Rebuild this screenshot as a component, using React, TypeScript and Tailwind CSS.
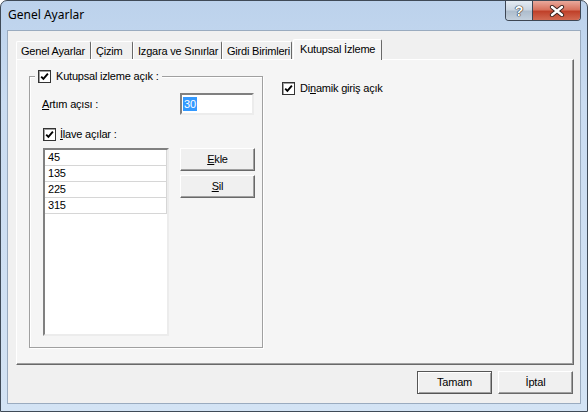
import React from "react"

const ui = { fontFamily: '"Liberation Sans", Arial, sans-serif' }

function Check() {
  return (
    <span className="flex h-[13px] w-[13px] shrink-0 items-center justify-center border border-[#333] bg-white shadow-[inset_1px_1px_0_#a0a0a0]">
      <svg width="9" height="9" viewBox="0 0 9 9">
        <path d="M1.2 4.6 L3.4 6.9 L7.9 1.6" fill="none" stroke="#000" strokeWidth="1.9" />
      </svg>
    </span>
  )
}

function Btn({ children, def = false }: { children: React.ReactNode; def?: boolean }) {
  return (
    <div
      className={
        def
          ? "flex h-[23px] w-[75px] items-center justify-center border border-[#555] bg-[#f0f0f0] shadow-[inset_1px_1px_0_#fff,inset_-1px_-1px_0_#a0a0a0] text-[11px] text-black"
          : "flex h-[23px] w-[75px] items-center justify-center border border-t-white border-l-white border-r-[#696969] border-b-[#696969] bg-[#f0f0f0] shadow-[inset_-1px_-1px_0_#a0a0a0] text-[11px] text-black"
      }
    >
      {children}
    </div>
  )
}

const tabs = [
  { label: "Genel Ayarlar", w: "w-[75px]" },
  { label: "Çizim", w: "w-[42px]" },
  { label: "Izgara ve Sınırlar", w: "w-[89px]" },
  { label: "Girdi Birimleri", w: "w-[70px]" },
]

export default function App() {
  return (
    <div className="h-[412px] w-[588px] bg-white" style={ui}>
      <div className="flex h-[412px] w-[588px] flex-col rounded-t-[7px] border border-[#3f4a57] bg-[linear-gradient(180deg,#bcd2ec_0%,#cadcf1_25%,#d3e3f4_100%)]">
        {/* Title bar */}
        <div className="flex h-[29px] shrink-0 items-start">
          <span
            className="pl-[7px] pt-[6px] text-[12px] leading-[16px] text-black"
            style={{ fontFamily: '"Noto Sans", "Open Sans", sans-serif' }}
          >
            Genel Ayarlar
          </span>
          <div className="ml-auto mr-[6px] flex h-[20px] overflow-hidden rounded-b-[4px] border border-t-0 border-[#3d4654]">
            <div className="flex w-[27px] items-center justify-center border-r border-[#3d4654] bg-[linear-gradient(180deg,#e4ebf3_0%,#cbd6e2_45%,#aebdcd_55%,#c3d0dd_100%)]">
              <span className="text-[14px] font-bold leading-none text-white [text-shadow:0_0_1px_#222,0_0_1px_#222,0_0_1px_#222]">
                ?
              </span>
            </div>
            <div className="flex w-[47px] items-center justify-center bg-[linear-gradient(180deg,#e9a99c_0%,#d8735f_45%,#c0412a_55%,#d26a52_100%)]">
              <svg width="16" height="12" viewBox="0 0 16 12">
                <path d="M3 2 L13 10 M13 2 L3 10" stroke="#3b2320" strokeWidth="4.2" strokeLinecap="round" />
                <path d="M3 2 L13 10 M13 2 L3 10" stroke="#fff" strokeWidth="2.4" strokeLinecap="round" />
              </svg>
            </div>
          </div>
        </div>

        {/* Client area */}
        <div className="mx-[6px] flex h-[374px] flex-col border border-[#9aabbf] bg-[#f0f0f0] pt-[8px] text-[11px] tracking-[-0.2px] text-black">
          {/* Tab strip */}
          <div className="ml-[8px] flex h-[20px] items-end">
            {tabs.map((t) => (
              <div
                key={t.label}
                className={`flex h-[18px] ${t.w} items-center whitespace-nowrap rounded-t-[2px] border-l border-t border-r border-l-white border-t-white border-r-[#696969] pl-[4px] pt-[1px] leading-none`}
              >
                {t.label}
              </div>
            ))}
            <div className="relative z-10 -mb-[1px] ml-[1px] flex h-[21px] w-[89px] items-start whitespace-nowrap rounded-t-[2px] border-l border-t border-r border-l-white border-t-white border-r-[#696969] bg-[#f5f5f5] pl-[6px] pt-[4px] leading-none">
              Kutupsal İzleme
            </div>
          </div>

          {/* Panel */}
          <div className="ml-[8px] flex h-[306px] w-[558px] items-start border border-t-white border-l-white border-r-[#696969] border-b-[#696969] bg-[#f5f5f5] shadow-[inset_-1px_-1px_0_#a0a0a0]">
            {/* Group box */}
            <div className="relative ml-[12px] mt-[16px] flex h-[272px] w-[234px] shrink-0 flex-col border border-[#a0a0a0] shadow-[inset_1px_1px_0_#fff,1px_1px_0_#fff]">
              <div className="absolute left-[5px] top-[-7px] flex items-center gap-[5px] bg-[#f5f5f5] px-[3px]">
                <Check />
                <span className="leading-none">Kutupsal izleme açık :</span>
              </div>

              <div className="mt-[16px] flex items-center">
                <span className="w-[150px] pl-[12px]">
                  <span className="underline">A</span>rtım açısı :
                </span>
                <div className="flex h-[22px] w-[74px] items-center border-2 border-t-[#808080] border-l-[#808080] border-r-[#ececec] border-b-[#ececec] bg-white pl-[1px]">
                  <span className="bg-[#3399ff] px-[1px] leading-[14px] text-white">30</span>
                </div>
              </div>

              <div className="ml-[13px] mt-[13px] flex items-center gap-[4px]">
                <Check />
                <span className="leading-none">
                  <span className="underline">İ</span>lave açılar :
                </span>
              </div>

              <div className="ml-[13px] mt-[7px] flex items-start">
                <div className="flex h-[188px] w-[126px] flex-col border-2 border-t-[#808080] border-l-[#808080] border-r-[#ececec] border-b-[#ececec] bg-white">
                  {["45", "135", "225", "315"].map((v) => (
                    <div
                      key={v}
                      className="flex h-[16px] w-[122px] items-center border-b border-r border-[#d6d6d6] pl-[3px] leading-none"
                    >
                      {v}
                    </div>
                  ))}
                </div>
                <div className="ml-[11px] flex flex-col gap-[4px]">
                  <Btn>
                    <span className="underline">E</span>kle
                  </Btn>
                  <Btn>
                    <span className="underline">S</span>il
                  </Btn>
                </div>
              </div>
            </div>

            {/* Dinamik giriş */}
            <div className="ml-[19px] mt-[22px] flex items-center gap-[5px]">
              <Check />
              <span className="leading-none">
                Di<span className="underline">n</span>amik giriş açık
              </span>
            </div>
          </div>

          {/* Bottom buttons */}
          <div className="mt-[6px] flex justify-end gap-[6px] pr-[7px]">
            <Btn def>Tamam</Btn>
            <Btn>İptal</Btn>
          </div>
        </div>
      </div>
    </div>
  )
}
